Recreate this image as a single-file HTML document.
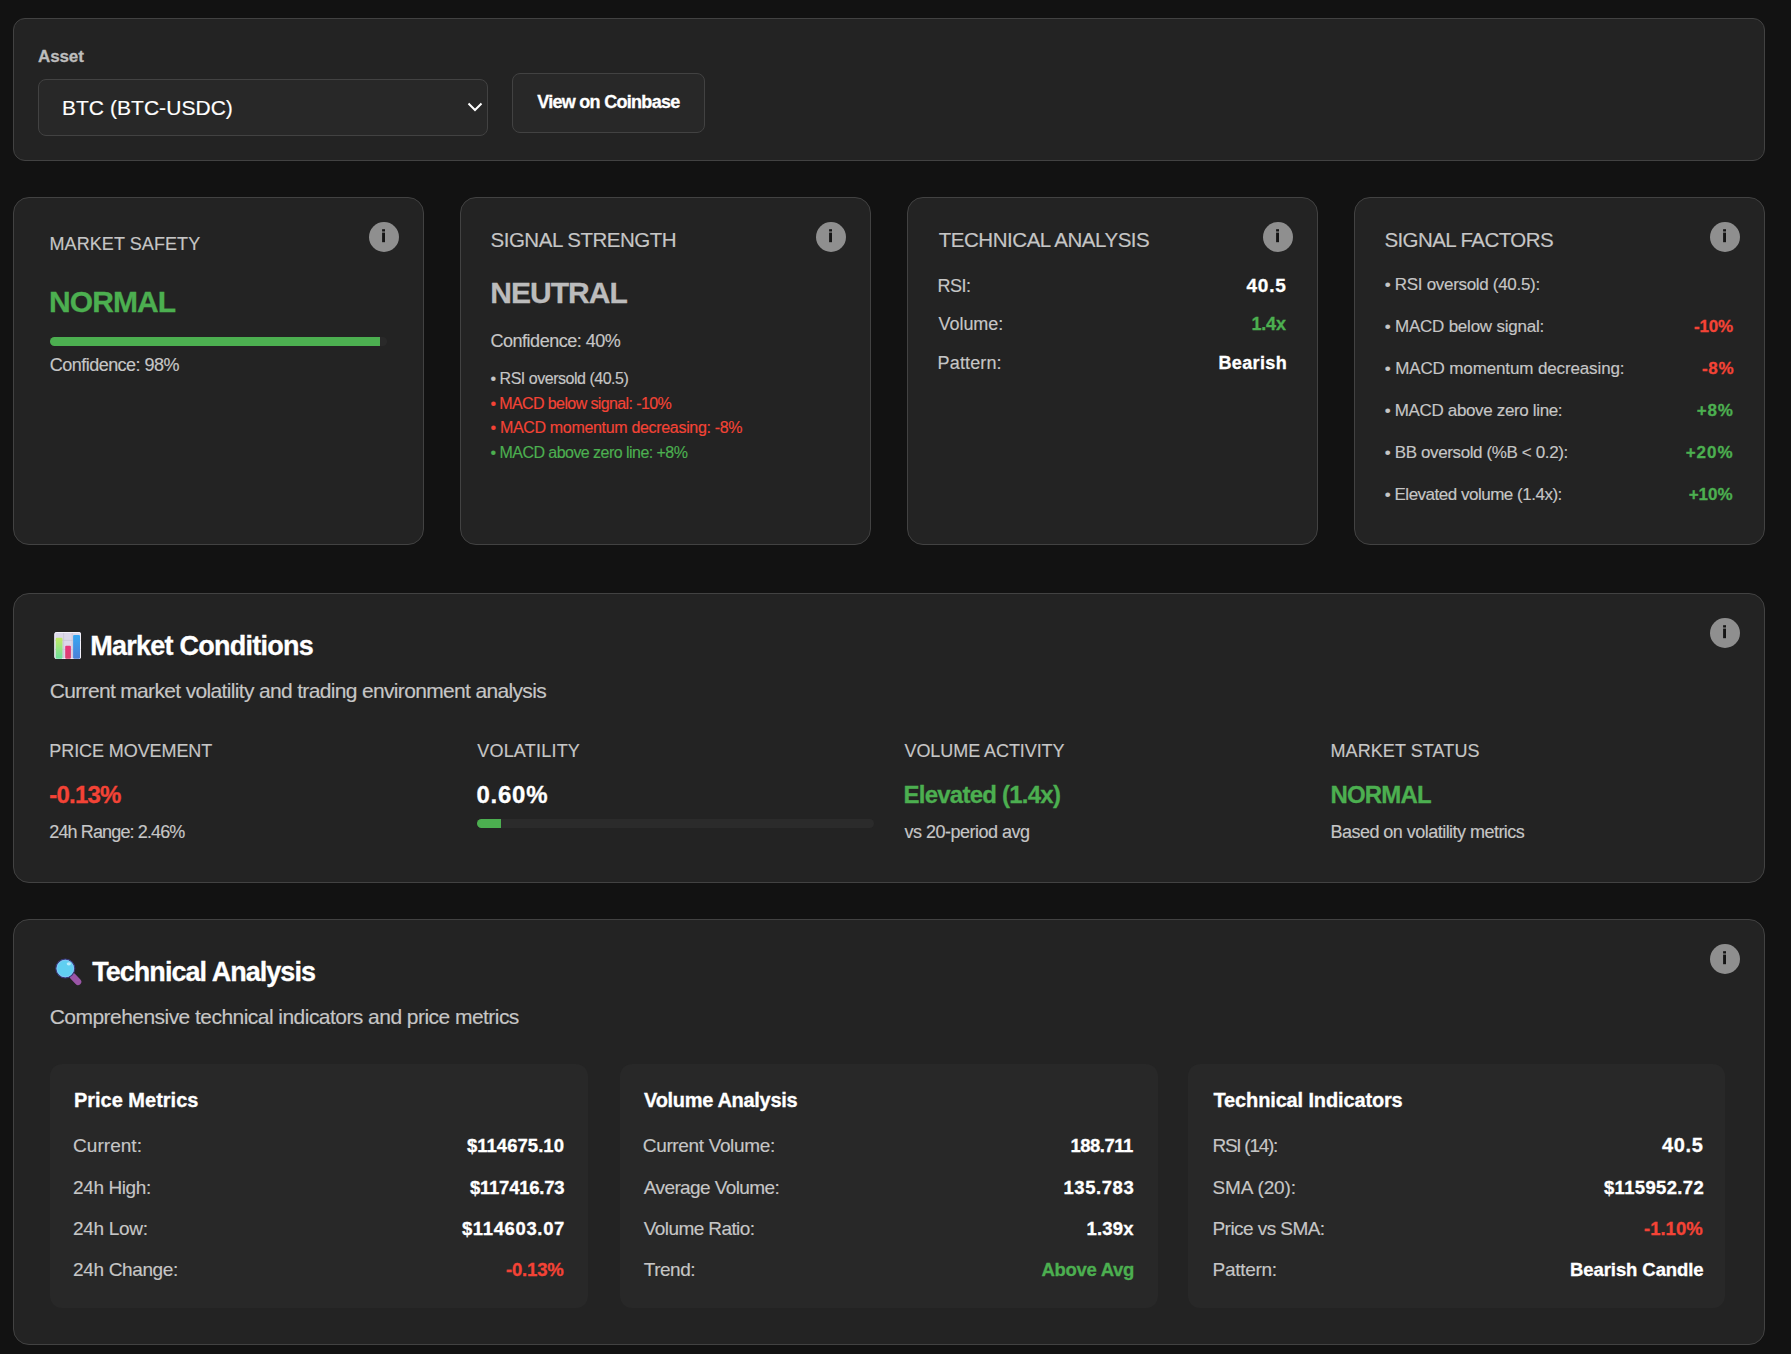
<!DOCTYPE html>
<html><head><meta charset="utf-8"><title>Dashboard</title>
<style>
html,body{margin:0;padding:0;width:1791px;height:1354px;overflow:hidden;background:#121212;}
body{position:relative;font-family:"Liberation Sans",sans-serif;}
.pn{position:absolute;box-sizing:border-box;background:#232323;border:1px solid #424242;}
.sel{position:absolute;box-sizing:border-box;background:#282828;border:1px solid #424242;border-radius:8px;}
.inn{position:absolute;box-sizing:border-box;background:#282828;border-radius:12px;}
.bar{position:absolute;border-radius:5px;overflow:hidden;}
.ic{position:absolute;}
.t{position:absolute;white-space:pre;-webkit-text-stroke:0.15px currentColor;}
.b{font-weight:700;-webkit-text-stroke:0.3px currentColor;}
</style></head><body>
<div class="pn" style="left:13px;top:18px;width:1752px;height:143px;border-radius:12px"></div>
<div class="sel" style="left:38px;top:79px;width:450px;height:57px"></div>
<svg class="ic" style="left:466px;top:101px" width="18" height="12" viewBox="0 0 18 12"><polyline points="2.5,2.5 9,9 15.5,2.5" fill="none" stroke="#fff" stroke-width="2"/></svg>
<div class="sel" style="left:512px;top:73px;width:193px;height:60px"></div>
<div class="pn" style="left:13px;top:197px;width:411px;height:348px;border-radius:16px"></div>
<svg class="ic" style="left:369px;top:222px" width="30" height="30" viewBox="0 0 30 30"><circle cx="15" cy="15" r="15" fill="#8f8f8f"/><rect x="13.1" y="7.2" width="2.9" height="2.3" fill="#151515"/><rect x="13.1" y="10.6" width="2.9" height="9.6" fill="#151515"/></svg>
<div class="pn" style="left:460px;top:197px;width:411px;height:348px;border-radius:16px"></div>
<svg class="ic" style="left:816px;top:222px" width="30" height="30" viewBox="0 0 30 30"><circle cx="15" cy="15" r="15" fill="#8f8f8f"/><rect x="13.1" y="7.2" width="2.9" height="2.3" fill="#151515"/><rect x="13.1" y="10.6" width="2.9" height="9.6" fill="#151515"/></svg>
<div class="pn" style="left:907px;top:197px;width:411px;height:348px;border-radius:16px"></div>
<svg class="ic" style="left:1263px;top:222px" width="30" height="30" viewBox="0 0 30 30"><circle cx="15" cy="15" r="15" fill="#8f8f8f"/><rect x="13.1" y="7.2" width="2.9" height="2.3" fill="#151515"/><rect x="13.1" y="10.6" width="2.9" height="9.6" fill="#151515"/></svg>
<div class="pn" style="left:1354px;top:197px;width:411px;height:348px;border-radius:16px"></div>
<svg class="ic" style="left:1710px;top:222px" width="30" height="30" viewBox="0 0 30 30"><circle cx="15" cy="15" r="15" fill="#8f8f8f"/><rect x="13.1" y="7.2" width="2.9" height="2.3" fill="#151515"/><rect x="13.1" y="10.6" width="2.9" height="9.6" fill="#151515"/></svg>
<div class="bar" style="left:50px;top:337px;width:337px;height:9px;background:rgba(255,255,255,0.03)"><div style="width:98%;height:100%;background:#4caf50"></div></div>
<div class="pn" style="left:13px;top:593px;width:1752px;height:290px;border-radius:16px"></div>
<svg class="ic" style="left:1710px;top:618px" width="30" height="30" viewBox="0 0 30 30"><circle cx="15" cy="15" r="15" fill="#8f8f8f"/><rect x="13.1" y="7.2" width="2.9" height="2.3" fill="#151515"/><rect x="13.1" y="10.6" width="2.9" height="9.6" fill="#151515"/></svg>
<div class="bar" style="left:477px;top:819px;width:397px;height:9px;background:#2b2b2b"><div style="width:6%;height:100%;background:#4caf50"></div></div>
<div class="pn" style="left:13px;top:919px;width:1752px;height:426px;border-radius:16px"></div>
<svg class="ic" style="left:1710px;top:944px" width="30" height="30" viewBox="0 0 30 30"><circle cx="15" cy="15" r="15" fill="#8f8f8f"/><rect x="13.1" y="7.2" width="2.9" height="2.3" fill="#151515"/><rect x="13.1" y="10.6" width="2.9" height="9.6" fill="#151515"/></svg>
<div class="inn" style="left:50px;top:1064px;width:538px;height:244px"></div>
<div class="inn" style="left:620px;top:1064px;width:538px;height:244px"></div>
<div class="inn" style="left:1188px;top:1064px;width:537px;height:244px"></div>
<svg class="ic" style="left:50px;top:628px" width="36" height="36" viewBox="0 0 36 36">
<defs><linearGradient id="gg" x1="0" y1="0" x2="0" y2="1"><stop offset="0" stop-color="#c2ea66"/><stop offset="1" stop-color="#6cdf9c"/></linearGradient>
<linearGradient id="bg2" x1="0" y1="0" x2="0" y2="1"><stop offset="0" stop-color="#36a8f4"/><stop offset="1" stop-color="#4b7fd7"/></linearGradient>
<linearGradient id="pk" x1="0" y1="0" x2="0" y2="1"><stop offset="0" stop-color="#e8347c"/><stop offset="1" stop-color="#d84470"/></linearGradient></defs>
<rect x="4.4" y="4" width="26.6" height="27" rx="2" fill="#dcd8ea"/>
<rect x="4.9" y="4.5" width="25.6" height="26" rx="1.6" fill="none" stroke="#f4f2fa" stroke-width="1"/>
<line x1="13.6" y1="5" x2="13.6" y2="30.5" stroke="#c9c5d6" stroke-width="0.8"/><line x1="22.2" y1="5" x2="22.2" y2="30.5" stroke="#c9c5d6" stroke-width="0.8"/>
<line x1="5" y1="12.4" x2="30.5" y2="12.4" stroke="#c9c5d6" stroke-width="0.8"/><line x1="5" y1="21.4" x2="30.5" y2="21.4" stroke="#c9c5d6" stroke-width="0.8"/>
<rect x="5.7" y="9.8" width="6.8" height="20.9" rx="1.2" fill="url(#gg)"/>
<rect x="15.2" y="17.8" width="5.7" height="12.9" rx="1" fill="url(#pk)"/>
<rect x="23.1" y="6.9" width="6.9" height="23.8" rx="1.2" fill="url(#bg2)"/>
</svg>
<svg class="ic" style="left:50px;top:954px" width="36" height="36" viewBox="0 0 36 36">
<line x1="23" y1="22.5" x2="28" y2="27.8" stroke="#9a55a6" stroke-width="6.6" stroke-linecap="round"/>
<circle cx="15.3" cy="14.5" r="9.4" fill="#60cff1" stroke="#3a3878" stroke-width="1.3"/>
<circle cx="15.3" cy="14.5" r="8.3" fill="none" stroke="#86c6f6" stroke-width="0.9"/>
<ellipse cx="18.8" cy="9.8" rx="2.1" ry="1.6" fill="#b9ecfc"/>
</svg>
<div class="t b" style="left:38.1px;top:48.0px;font-size:17px;line-height:17px;color:#bdbdbd;letter-spacing:-0.15px">Asset</div>
<div class="t" style="left:61.9px;top:97.0px;font-size:21px;line-height:21px;color:#ffffff;letter-spacing:0.05px">BTC (BTC-USDC)</div>
<div class="t b" style="left:537.2px;top:93.0px;font-size:18px;line-height:18px;color:#ffffff;letter-spacing:-0.71px">View on Coinbase</div>
<div class="t" style="left:49.5px;top:235.0px;font-size:18px;line-height:18px;color:#c6c6c6;letter-spacing:0.08px">MARKET SAFETY</div>
<div class="t b" style="left:49.1px;top:287.0px;font-size:30px;line-height:30px;color:#4caf50;letter-spacing:-0.92px">NORMAL</div>
<div class="t" style="left:49.8px;top:356.0px;font-size:18px;line-height:18px;color:#c6c6c6;letter-spacing:-0.53px">Confidence: 98%</div>
<div class="t" style="left:490.5px;top:230.0px;font-size:20.5px;line-height:20px;color:#c6c6c6;letter-spacing:-0.48px">SIGNAL STRENGTH</div>
<div class="t b" style="left:490.2px;top:278.0px;font-size:30px;line-height:30px;color:#bcbcbc;letter-spacing:-0.95px">NEUTRAL</div>
<div class="t" style="left:490.5px;top:332.0px;font-size:18px;line-height:18px;color:#c6c6c6;letter-spacing:-0.48px">Confidence: 40%</div>
<div class="t" style="left:490.5px;top:371.0px;font-size:16px;line-height:16px;color:#c6c6c6;letter-spacing:-0.48px">• RSI oversold (40.5)</div>
<div class="t" style="left:490.5px;top:396.0px;font-size:16px;line-height:16px;color:#f44336;letter-spacing:-0.61px">• MACD below signal: -10%</div>
<div class="t" style="left:490.5px;top:420.0px;font-size:16px;line-height:16px;color:#f44336;letter-spacing:-0.32px">• MACD momentum decreasing: -8%</div>
<div class="t" style="left:490.5px;top:445.0px;font-size:16px;line-height:16px;color:#4caf50;letter-spacing:-0.54px">• MACD above zero line: +8%</div>
<div class="t" style="left:938.7px;top:230.0px;font-size:20.5px;line-height:20px;color:#c6c6c6;letter-spacing:-0.45px">TECHNICAL ANALYSIS</div>
<div class="t" style="left:937.6px;top:277.0px;font-size:18px;line-height:18px;color:#c6c6c6;letter-spacing:-0.5px">RSI:</div>
<div class="t" style="left:938.6px;top:315.0px;font-size:18px;line-height:18px;color:#c6c6c6;letter-spacing:-0.07px">Volume:</div>
<div class="t" style="left:937.6px;top:354.0px;font-size:18px;line-height:18px;color:#c6c6c6;letter-spacing:0.14px">Pattern:</div>
<div class="t b" style="left:1246.5px;top:276.0px;font-size:19px;line-height:19px;color:#ffffff;letter-spacing:0.77px">40.5</div>
<div class="t b" style="left:1251.5px;top:315.0px;font-size:18px;line-height:18px;color:#4caf50;letter-spacing:-0.2px">1.4x</div>
<div class="t b" style="left:1218.5px;top:354.0px;font-size:18px;line-height:18px;color:#ffffff;letter-spacing:0.35px">Bearish</div>
<div class="t" style="left:1384.4px;top:230.0px;font-size:20.5px;line-height:20px;color:#c6c6c6;letter-spacing:-0.57px">SIGNAL FACTORS</div>
<div class="t" style="left:1384.8px;top:276.0px;font-size:17px;line-height:17px;color:#c6c6c6;letter-spacing:-0.31px">• RSI oversold (40.5):</div>
<div class="t" style="left:1384.8px;top:318.0px;font-size:17px;line-height:17px;color:#c6c6c6;letter-spacing:-0.23px">• MACD below signal:</div>
<div class="t" style="left:1384.8px;top:360.0px;font-size:17px;line-height:17px;color:#c6c6c6;letter-spacing:-0.13px">• MACD momentum decreasing:</div>
<div class="t" style="left:1384.8px;top:402.0px;font-size:17px;line-height:17px;color:#c6c6c6;letter-spacing:-0.35px">• MACD above zero line:</div>
<div class="t" style="left:1384.8px;top:444.0px;font-size:17px;line-height:17px;color:#c6c6c6;letter-spacing:-0.38px">• BB oversold (%B &lt; 0.2):</div>
<div class="t" style="left:1384.8px;top:486.0px;font-size:17px;line-height:17px;color:#c6c6c6;letter-spacing:-0.49px">• Elevated volume (1.4x):</div>
<div class="t b" style="left:1693.9px;top:318.0px;font-size:17px;line-height:17px;color:#f44336;letter-spacing:-0.17px">-10%</div>
<div class="t b" style="left:1701.9px;top:360.0px;font-size:17px;line-height:17px;color:#f44336;letter-spacing:0.75px">-8%</div>
<div class="t b" style="left:1696.7px;top:402.0px;font-size:17px;line-height:17px;color:#4caf50;letter-spacing:0.8px">+8%</div>
<div class="t b" style="left:1685.7px;top:444.0px;font-size:17px;line-height:17px;color:#4caf50;letter-spacing:1.0px">+20%</div>
<div class="t b" style="left:1688.7px;top:486.0px;font-size:17px;line-height:17px;color:#4caf50">+10%</div>
<div class="t b" style="left:90.2px;top:633.0px;font-size:27px;line-height:27px;color:#ffffff;letter-spacing:-0.75px">Market Conditions</div>
<div class="t" style="left:49.7px;top:680.0px;font-size:21px;line-height:21px;color:#c6c6c6;letter-spacing:-0.66px">Current market volatility and trading environment analysis</div>
<div class="t" style="left:49.3px;top:742.0px;font-size:18px;line-height:18px;color:#c6c6c6;letter-spacing:-0.08px">PRICE MOVEMENT</div>
<div class="t b" style="left:49.3px;top:783.0px;font-size:24px;line-height:24px;color:#f44336;letter-spacing:-0.8px">-0.13%</div>
<div class="t" style="left:49.3px;top:823.0px;font-size:18px;line-height:18px;color:#c6c6c6;letter-spacing:-0.87px">24h Range: 2.46%</div>
<div class="t" style="left:477.2px;top:742.0px;font-size:18px;line-height:18px;color:#c6c6c6;letter-spacing:0.22px">VOLATILITY</div>
<div class="t b" style="left:476.5px;top:783.0px;font-size:24px;line-height:24px;color:#ffffff;letter-spacing:0.73px">0.60%</div>
<div class="t" style="left:904.5px;top:742.0px;font-size:18px;line-height:18px;color:#c6c6c6;letter-spacing:-0.07px">VOLUME ACTIVITY</div>
<div class="t b" style="left:903.5px;top:783.0px;font-size:24px;line-height:24px;color:#4caf50;letter-spacing:-0.76px">Elevated (1.4x)</div>
<div class="t" style="left:904.5px;top:823.0px;font-size:18px;line-height:18px;color:#c6c6c6;letter-spacing:-0.51px">vs 20-period avg</div>
<div class="t" style="left:1330.5px;top:742.0px;font-size:18px;line-height:18px;color:#c6c6c6;letter-spacing:0.08px">MARKET STATUS</div>
<div class="t b" style="left:1330.5px;top:783.0px;font-size:24px;line-height:24px;color:#4caf50;letter-spacing:-0.84px">NORMAL</div>
<div class="t" style="left:1330.5px;top:823.0px;font-size:18px;line-height:18px;color:#c6c6c6;letter-spacing:-0.53px">Based on volatility metrics</div>
<div class="t b" style="left:92.2px;top:959.0px;font-size:27px;line-height:27px;color:#ffffff;letter-spacing:-0.96px">Technical Analysis</div>
<div class="t" style="left:49.7px;top:1006.0px;font-size:21px;line-height:21px;color:#c6c6c6;letter-spacing:-0.54px">Comprehensive technical indicators and price metrics</div>
<div class="t b" style="left:73.9px;top:1090.0px;font-size:20px;line-height:20px;color:#ffffff">Price Metrics</div>
<div class="t b" style="left:644.1px;top:1090.0px;font-size:20px;line-height:20px;color:#ffffff;letter-spacing:-0.31px">Volume Analysis</div>
<div class="t b" style="left:1213.5px;top:1090.0px;font-size:20px;line-height:20px;color:#ffffff;letter-spacing:-0.14px">Technical Indicators</div>
<div class="t" style="left:73.1px;top:1136.0px;font-size:19px;line-height:19px;color:#c6c6c6;letter-spacing:0.03px">Current:</div>
<div class="t b" style="left:466.9px;top:1137.0px;font-size:18.5px;line-height:18px;color:#ffffff;letter-spacing:0.04px">$114675.10</div>
<div class="t" style="left:73.1px;top:1178.0px;font-size:19px;line-height:19px;color:#c6c6c6;letter-spacing:-0.4px">24h High:</div>
<div class="t b" style="left:469.9px;top:1179.0px;font-size:18.5px;line-height:18px;color:#ffffff;letter-spacing:-0.22px">$117416.73</div>
<div class="t" style="left:73.1px;top:1219.0px;font-size:19px;line-height:19px;color:#c6c6c6;letter-spacing:-0.31px">24h Low:</div>
<div class="t b" style="left:461.9px;top:1220.0px;font-size:18.5px;line-height:18px;color:#ffffff;letter-spacing:0.64px">$114603.07</div>
<div class="t" style="left:73.1px;top:1260.0px;font-size:19px;line-height:19px;color:#c6c6c6;letter-spacing:-0.36px">24h Change:</div>
<div class="t b" style="left:505.9px;top:1261.0px;font-size:18.5px;line-height:18px;color:#f44336;letter-spacing:-0.16px">-0.13%</div>
<div class="t" style="left:642.8px;top:1136.0px;font-size:19px;line-height:19px;color:#c6c6c6;letter-spacing:-0.35px">Current Volume:</div>
<div class="t b" style="left:1070.5px;top:1137.0px;font-size:18.5px;line-height:18px;color:#ffffff;letter-spacing:-0.53px">188.711</div>
<div class="t" style="left:643.8px;top:1178.0px;font-size:19px;line-height:19px;color:#c6c6c6;letter-spacing:-0.6px">Average Volume:</div>
<div class="t b" style="left:1063.5px;top:1179.0px;font-size:18.5px;line-height:18px;color:#ffffff;letter-spacing:0.55px">135.783</div>
<div class="t" style="left:643.8px;top:1219.0px;font-size:19px;line-height:19px;color:#c6c6c6;letter-spacing:-0.59px">Volume Ratio:</div>
<div class="t b" style="left:1086.5px;top:1220.0px;font-size:18.5px;line-height:18px;color:#ffffff;letter-spacing:0.18px">1.39x</div>
<div class="t" style="left:643.8px;top:1260.0px;font-size:19px;line-height:19px;color:#c6c6c6;letter-spacing:-0.5px">Trend:</div>
<div class="t b" style="left:1041.5px;top:1261.0px;font-size:18.5px;line-height:18px;color:#4caf50;letter-spacing:-0.31px">Above Avg</div>
<div class="t" style="left:1212.5px;top:1136.0px;font-size:19px;line-height:19px;color:#c6c6c6;letter-spacing:-1.28px">RSI (14):</div>
<div class="t b" style="left:1662.0px;top:1135.0px;font-size:20px;line-height:20px;color:#ffffff;letter-spacing:0.67px">40.5</div>
<div class="t" style="left:1212.5px;top:1178.0px;font-size:19px;line-height:19px;color:#c6c6c6;letter-spacing:-0.12px">SMA (20):</div>
<div class="t b" style="left:1604.0px;top:1179.0px;font-size:18.5px;line-height:18px;color:#ffffff;letter-spacing:0.33px">$115952.72</div>
<div class="t" style="left:1212.5px;top:1219.0px;font-size:19px;line-height:19px;color:#c6c6c6;letter-spacing:-0.56px">Price vs SMA:</div>
<div class="t b" style="left:1644.0px;top:1220.0px;font-size:18.5px;line-height:18px;color:#f44336">-1.10%</div>
<div class="t" style="left:1212.5px;top:1260.0px;font-size:19px;line-height:19px;color:#c6c6c6;letter-spacing:-0.29px">Pattern:</div>
<div class="t b" style="left:1570.0px;top:1261.0px;font-size:18.5px;line-height:18px;color:#ffffff;letter-spacing:-0.08px">Bearish Candle</div>
</body></html>
